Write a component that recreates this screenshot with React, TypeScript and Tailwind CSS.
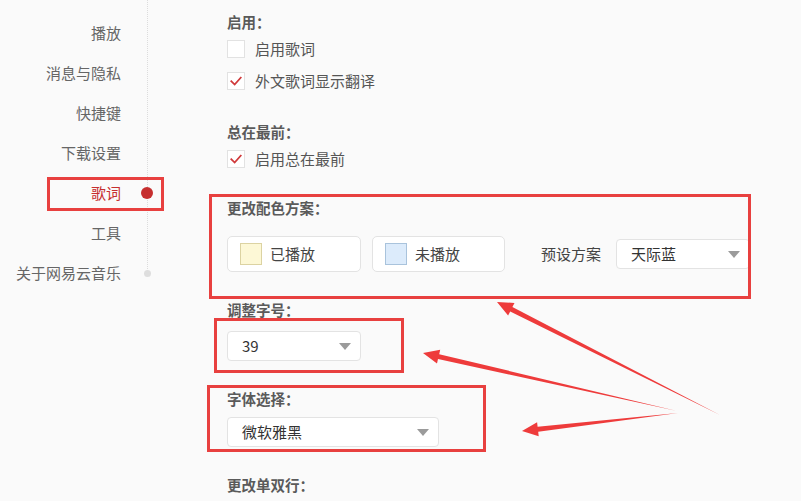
import React from "react";

const font = { fontFamily: '"Noto Sans CJK SC", "Noto Sans", sans-serif' };

function Caret() {
  return (
    <svg width="12" height="7" viewBox="0 0 12 7" className="shrink-0 mt-[1px]">
      <polygon points="0,0 12,0 6,7" fill="#9b9b9b" />
    </svg>
  );
}

function Checkbox({ checked }: { checked?: boolean }) {
  return (
    <div className="w-[18px] h-[18px] border border-[#e2e2e2] bg-white shrink-0 flex items-center justify-center">
      {checked && (
        <svg width="18" height="18" viewBox="0 0 18 18">
          <polyline points="3,8.5 7.5,13 15,4.5" fill="none" stroke="#d0393a" strokeWidth="2" />
        </svg>
      )}
    </div>
  );
}

function CheckRow({ label, checked, className }: { label: string; checked?: boolean; className?: string }) {
  return (
    <div className={"flex items-center h-[20px] " + (className ?? "")}>
      <Checkbox checked={checked} />
      <span className="ml-[10px] text-[15px] text-[#555] leading-[20px]">{label}</span>
    </div>
  );
}

function Header({ text, className }: { text: string; className?: string }) {
  return (
    <div className={"h-[20px] leading-[20px] text-[14.5px] font-bold text-[#5a5a5a] " + (className ?? "")}>{text}</div>
  );
}

function Select({ value, width, className }: { value: string; width: string; className?: string }) {
  return (
    <div
      className={
        "h-[30px] bg-white border border-[#e3e3e3] rounded-[4px] flex items-center justify-between pl-[14px] pr-[9px] " +
        width +
        " " +
        (className ?? "")
      }
    >
      <span className="text-[15px] text-[#333]">{value}</span>
      <Caret />
    </div>
  );
}

function ColorButton({ label, swatch, className }: { label: string; swatch: string; className?: string }) {
  return (
    <div className={"h-[36px] bg-white border border-[#e3e3e3] rounded-[5px] flex items-center pl-[12px] " + (className ?? "")}>
      <div className={"w-[22px] h-[22px] border " + swatch} />
      <span className="ml-[8px] text-[15px] text-[#444]">{label}</span>
    </div>
  );
}

export default function App() {
  const nav = ["播放", "消息与隐私", "快捷键", "下载设置", "歌词", "工具", "关于网易云音乐"];
  return (
    <div className="relative w-[801px] h-[501px] overflow-hidden bg-[#fafafa] flex" style={font}>
      {/* Sidebar */}
      <div className="relative w-[148px] shrink-0 pt-[13px]">
        <div className="absolute left-[147px] top-0 h-[273px] border-l border-dotted border-[#dcdcdc]" />
        {nav.map((n) => (
          <div
            key={n}
            className={
              "h-[40px] leading-[40px] text-right pr-[27px] text-[15px] " +
              (n === "歌词" ? "text-[#c62f2f]" : "text-[#666]")
            }
          >
            {n}
          </div>
        ))}
        <div className="absolute left-[141px] top-[187px] w-[12px] h-[12px] rounded-full bg-[#c62f2f]" />
        <div className="absolute left-[144px] top-[270px] w-[7px] h-[7px] rounded-full bg-[#dedede]" />
      </div>

      {/* Main */}
      <div className="flex-1 pl-[79px] pt-[12px] flex flex-col">
        <Header text="启用：" />
        <CheckRow label="启用歌词" className="mt-[7px]" />
        <CheckRow label="外文歌词显示翻译" checked className="mt-[12px]" />
        <Header text="总在最前：" className="mt-[31px]" />
        <CheckRow label="启用总在最前" checked className="mt-[7px]" />
        <Header text="更改配色方案：" className="mt-[29px]" />
        <div className="mt-[18px] flex items-center">
          <ColorButton label="已播放" swatch="bg-[#fdf8d6] border-[#dcd3a2]" className="w-[134px]" />
          <ColorButton label="未播放" swatch="bg-[#dcebfb] border-[#a9c3dc]" className="w-[133px] ml-[11px]" />
          <span className="ml-[36px] text-[15px] text-[#444]">预设方案</span>
          <Select value="天际蓝" width="w-[134px]" className="ml-[15px]" />
        </div>
        <Header text="调整字号：" className="mt-[28px]" />
        <Select value="39" width="w-[134px]" className="mt-[11px]" />
        <Header text="字体选择：" className="mt-[28px]" />
        <Select value="微软雅黑" width="w-[212px]" className="mt-[8px]" />
        <Header text="更改单双行：" className="mt-[28px]" />
      </div>

      {/* Annotation boxes */}
      <div className="absolute left-[47px] top-[177px] w-[117px] h-[34px] border-[3px] border-[#e8403f] pointer-events-none" />
      <div className="absolute left-[209px] top-[194px] w-[542px] h-[105px] border-[3px] border-[#e8403f] pointer-events-none" />
      <div className="absolute left-[214px] top-[318px] w-[190px] h-[55px] border-[3px] border-[#e8403f] pointer-events-none" />
      <div className="absolute left-[207px] top-[385px] w-[279px] h-[67px] border-[3px] border-[#e8403f] pointer-events-none" />

      {/* Annotation arrows */}
      <svg className="absolute left-0 top-0 pointer-events-none" width="801" height="501" viewBox="0 0 801 501">
        <polygon fill="#ee3b3b" points="497,302 514.5,302.9 512.4,307 720,415 510.2,311.4 508.1,315.5" />
        <polygon fill="#ee3b3b" points="423,353 440.2,349.8 439.2,354.2 677,411 438,359 437,363.4" />
        <polygon fill="#ee3b3b" points="522,431 537.1,422.2 537.6,426.7 678,413 538.2,431.7 538.7,436.2" />
      </svg>
    </div>
  );
}
